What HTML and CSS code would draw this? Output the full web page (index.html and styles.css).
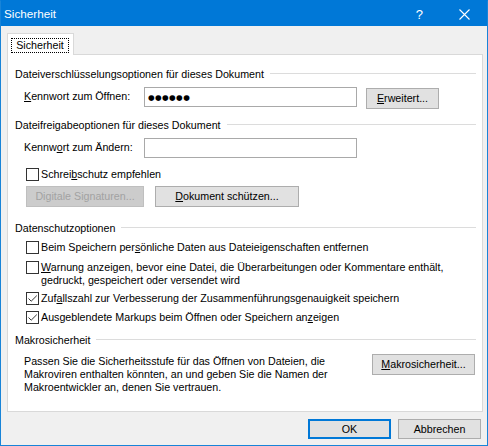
FILE: index.html
```html
<!DOCTYPE html>
<html lang="de">
<head>
<meta charset="utf-8">
<title>Sicherheit</title>
<link rel="stylesheet" href="styles.css">
</head>
<body>
<div class="window">
  <div class="titlebar">
    <span class="title">Sicherheit</span>
    <span class="tb-help">?</span>
    <svg class="tb-close" width="11" height="11" viewBox="0 0 11 11"><path d="M0.5 0.5L10.5 10.5M10.5 0.5L0.5 10.5" stroke="#fff" stroke-width="1.1" fill="none"/></svg>
  </div>
  <div class="client">
    <div class="tabs">
      <div class="tab"><span class="focus">Sicherheit</span></div>
    </div>
    <div class="panel">
      <div class="group-title g1">Dateiverschlüsselungsoptionen für dieses Dokument</div>
      <div class="field-row r1">
        <span class="field-label"><u>K</u>ennwort zum Öffnen:</span>
        <div class="textbox"><span class="pw">●●●●●●</span></div>
        <button class="btn btn-adv"><u>E</u>rweitert...</button>
      </div>

      <div class="group-title g2">Dateifreigabeoptionen für dieses Dokument</div>
      <div class="field-row r2">
        <span class="field-label">Kennw<u>o</u>rt zum Ändern:</span>
        <div class="textbox"></div>
      </div>
      <div class="check-row c0">
        <span class="box"></span>
        <span class="check-text">Schrei<u>b</u>schutz empfehlen</span>
      </div>
      <div class="btn-row">
        <button class="btn btn-sig" disabled>Digitale Signaturen...</button>
        <button class="btn btn-protect"><u>D</u>okument schützen...</button>
      </div>

      <div class="group-title g3">Datenschutzoptionen</div>
      <div class="check-row c1">
        <span class="box"></span>
        <span class="check-text">Beim Speichern per<u>s</u>önliche Daten aus Dateieigenschaften entfernen</span>
      </div>
      <div class="check-row c2">
        <span class="box"></span>
        <span class="check-text"><u>W</u>arnung anzeigen, bevor eine Datei, die Überarbeitungen oder Kommentare enthält,<br>gedruckt, gespeichert oder versendet wird</span>
      </div>
      <div class="check-row c3">
        <span class="box checked"><svg width="11" height="11" viewBox="0 0 11 11"><path d="M1.5 5.5L4.2 8.2L9.8 2.6" stroke="#333" stroke-width="1" fill="none"/></svg></span>
        <span class="check-text">Zuf<u>a</u>llszahl zur Verbesserung der Zusammenführungsgenauigkeit speichern</span>
      </div>
      <div class="check-row c4">
        <span class="box checked"><svg width="11" height="11" viewBox="0 0 11 11"><path d="M1.5 5.5L4.2 8.2L9.8 2.6" stroke="#333" stroke-width="1" fill="none"/></svg></span>
        <span class="check-text">Ausgeblendete Markups beim Öffnen oder Speichern an<u>z</u>eigen</span>
      </div>

      <div class="group-title g4">Makrosicherheit</div>
      <div class="macro-row">
        <p class="macro-text">Passen Sie die Sicherheitsstufe für das Öffnen von Dateien, die<br>Makroviren enthalten könnten, an und geben Sie die Namen der<br>Makroentwickler an, denen Sie vertrauen.</p>
        <button class="btn btn-macro"><u>M</u>akrosicherheit...</button>
      </div>
    </div>
    <div class="footer">
      <button class="btn btn-foot btn-default">OK</button>
      <button class="btn btn-foot">Abbrechen</button>
    </div>
  </div>
</div>
</body>
</html>
```

FILE: styles.css
```css
html, body {
  margin: 0;
  padding: 0;
  background: #ffffff;
}

body {
  font-family: "Liberation Sans", Arial, sans-serif;
  font-size: 10.7px;
  color: #000000;
}

u {
  text-decoration: underline;
  text-underline-offset: 1px;
}

.window {
  width: 488px;
  height: 446px;
  box-sizing: border-box;
  border: 1px solid #1884d8;
  border-top-color: #0078d7;
  background: #f0f0f0;
  display: flex;
  flex-direction: column;
}

.titlebar {
  height: 25px;
  background: #0078d7;
  color: #ffffff;
  display: flex;
  align-items: center;
  flex: none;
}

.title {
  margin-left: 3px;
  font-size: 11.7px;
  flex: 1;
}

.tb-help {
  font-size: 13px;
  margin-right: 36px;
  margin-top: 1px;
}

.tb-close {
  margin-right: 17px;
  margin-top: 1px;
}

.client {
  padding: 7px 4px 0 6px;
  flex: 1;
}

.tabs {
  height: 21px;
  display: flex;
}

.tab {
  position: relative;
  z-index: 1;
  width: 67px;
  height: 22px;
  box-sizing: border-box;
  border: 1px solid #d9d9d9;
  border-bottom: none;
  background: #ffffff;
  padding: 4px 0 0 3px;
}

.focus {
  display: block;
  width: 58px;
  height: 15px;
  box-sizing: border-box;
  border: 1px dotted #000000;
  line-height: 13px;
  text-align: center;
}

.panel {
  width: 476px;
  height: 358px;
  box-sizing: border-box;
  border: 1px solid #d9d9d9;
  background: #ffffff;
  padding: 0 6px 0 7px;
  display: flex;
  flex-direction: column;
}

.group-title {
  display: flex;
  align-items: center;
  height: 15px;
  line-height: 15px;
  flex: none;
}

.group-title::after {
  content: "";
  flex: 1;
  height: 1px;
  background: #dcdcdc;
  margin-left: 6px;
  margin-top: -2px;
}

.g1 { margin-top: 12px; }
.g2 { margin-top: 9px; }
.g3 { margin-top: 14px; }
.g4 { margin-top: 9px; }

.field-row {
  display: flex;
  align-items: flex-start;
  padding-left: 9px;
  flex: none;
}

.r1 { margin-top: 5px; height: 22px; }
.r2 { margin-top: 5px; height: 20px; }

.field-label {
  width: 120px;
  height: 20px;
  line-height: 19px;
  flex: none;
}

.textbox {
  width: 213px;
  height: 20px;
  box-sizing: border-box;
  border: 1px solid #a9a9a9;
  background: #ffffff;
  display: flex;
  align-items: center;
  padding-left: 3px;
  flex: none;
}

.pw {
  font-family: "DejaVu Sans", sans-serif;
  font-size: 7.6px;
  letter-spacing: 0.4px;
  line-height: 10px;
  margin-top: 1px;
}

.btn {
  font-family: "Liberation Sans", Arial, sans-serif;
  font-size: 10.7px;
  color: #000000;
  background: #e1e1e1;
  border: 1px solid #adadad;
  box-sizing: border-box;
  padding: 0;
  margin: 0;
  text-align: center;
  line-height: 17px;
  flex: none;
}

.btn:disabled {
  background: #cccccc;
  border-color: #bfbfbf;
  color: #a2a2a2;
}

.btn-adv {
  width: 73px;
  height: 21px;
  margin-left: 9px;
  margin-top: 1px;
}

.check-row {
  display: flex;
  align-items: flex-start;
  padding-left: 11px;
  line-height: 13px;
  flex: none;
}

.c0 { margin-top: 10px; }
.c1 { margin-top: 5px; }
.c2 { margin-top: 7px; }
.c3 { margin-top: 5px; }
.c4 { margin-top: 6px; }

.box {
  width: 13px;
  height: 13px;
  box-sizing: border-box;
  border: 1px solid #333333;
  background: #ffffff;
  margin-right: 2px;
  flex: none;
  display: flex;
  align-items: center;
  justify-content: center;
}

.box svg {
  display: block;
}

.check-text {
  white-space: nowrap;
}

.btn-row {
  display: flex;
  margin-top: 5px;
  padding-left: 11px;
  gap: 11px;
  height: 21px;
  flex: none;
}

.btn-sig {
  width: 118px;
  height: 21px;
}

.btn-protect {
  width: 144px;
  height: 21px;
}

.macro-row {
  display: flex;
  align-items: flex-start;
  margin-top: 6px;
  padding-left: 9px;
  flex: none;
}

.macro-text {
  margin: 0;
  line-height: 13px;
  padding-top: 1px;
  flex: 1;
}

.btn-macro {
  width: 103px;
  height: 21px;
  margin-right: 1px;
}

.footer {
  display: flex;
  justify-content: flex-end;
  gap: 7px;
  margin-top: 7px;
  padding-right: 2px;
}

.btn-foot {
  width: 83px;
  height: 20px;
  line-height: 18px;
}

.btn-default {
  border: 2px solid #0078d7;
  line-height: 16px;
}
```
